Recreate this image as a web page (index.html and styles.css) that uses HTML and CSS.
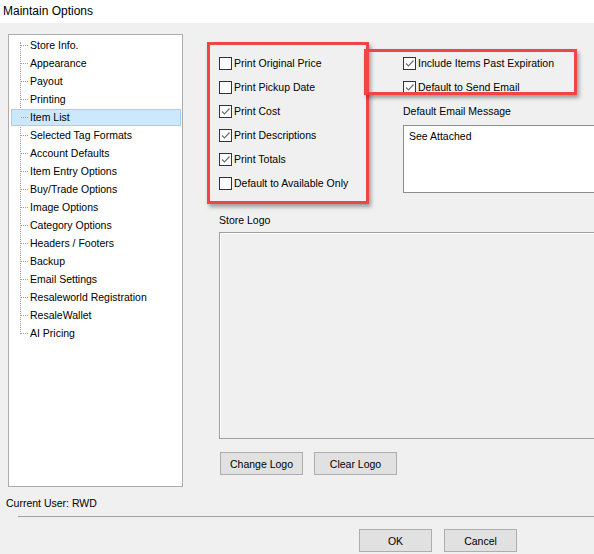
FILE: index.html
```html
<!DOCTYPE html>
<html>
<head>
<meta charset="utf-8">
<title>Maintain Options</title>
<link rel="stylesheet" href="styles.css">
</head>
<body>
<div class="window">
  <div class="titlebar">Maintain Options</div>

  <div class="dialog-body">
    <div class="tree">
      <ul class="tree-list">
        <li>Store Info.</li>
        <li>Appearance</li>
        <li>Payout</li>
        <li>Printing</li>
        <li class="selected">Item List</li>
        <li>Selected Tag Formats</li>
        <li>Account Defaults</li>
        <li>Item Entry Options</li>
        <li>Buy/Trade Options</li>
        <li>Image Options</li>
        <li>Category Options</li>
        <li>Headers / Footers</li>
        <li>Backup</li>
        <li>Email Settings</li>
        <li>Resaleworld Registration</li>
        <li>ResaleWallet</li>
        <li>AI Pricing</li>
      </ul>
    </div>

    <div class="pane">
      <div class="options">
        <div class="col col-left">
          <label class="check"><span class="box"></span>Print Original Price</label>
          <label class="check"><span class="box"></span>Print Pickup Date</label>
          <label class="check"><span class="box checked"><svg viewBox="0 0 11 11" width="11" height="11"><path d="M2 5.5 L4.5 8 L9.5 2.5" fill="none" stroke="#707070" stroke-width="1.2"/></svg></span>Print Cost</label>
          <label class="check"><span class="box checked"><svg viewBox="0 0 11 11" width="11" height="11"><path d="M2 5.5 L4.5 8 L9.5 2.5" fill="none" stroke="#707070" stroke-width="1.2"/></svg></span>Print Descriptions</label>
          <label class="check"><span class="box checked"><svg viewBox="0 0 11 11" width="11" height="11"><path d="M2 5.5 L4.5 8 L9.5 2.5" fill="none" stroke="#707070" stroke-width="1.2"/></svg></span>Print Totals</label>
          <label class="check"><span class="box"></span>Default to Available Only</label>
          <div class="mark mark-left"></div>
        </div>
        <div class="col col-right">
          <label class="check"><span class="box checked"><svg viewBox="0 0 11 11" width="11" height="11"><path d="M2 5.5 L4.5 8 L9.5 2.5" fill="none" stroke="#707070" stroke-width="1.2"/></svg></span>Include Items Past Expiration</label>
          <label class="check"><span class="box checked"><svg viewBox="0 0 11 11" width="11" height="11"><path d="M2 5.5 L4.5 8 L9.5 2.5" fill="none" stroke="#707070" stroke-width="1.2"/></svg></span>Default to Send Email</label>
          <div class="field-label">Default Email Message</div>
          <div class="memo">See Attached</div>
          <div class="mark mark-right"></div>
        </div>
      </div>

      <div class="logo-label">Store Logo</div>
      <div class="logo-box"></div>
      <div class="logo-buttons">
        <button class="btn btn-logo">Change Logo</button>
        <button class="btn btn-logo">Clear Logo</button>
      </div>
    </div>
  </div>

  <div class="status">Current User: RWD</div>
  <div class="separator"></div>
  <div class="actions">
    <button class="btn btn-action">OK</button>
    <button class="btn btn-action">Cancel</button>
  </div>
</div>
</body>
</html>
```

FILE: styles.css
```css
html, body {
  margin: 0;
  padding: 0;
}

body {
  background: #f0f0f0;
  font-family: "Liberation Sans", Arial, sans-serif;
  font-size: 10.5px;
  color: #000;
  width: 594px;
  height: 554px;
  overflow: hidden;
}

.titlebar {
  height: 23px;
  line-height: 22px;
  background: #fff;
  padding-left: 3px;
  font-size: 12px;
}

/* main area: tree on the left, settings pane on the right */
.dialog-body {
  display: flex;
  padding: 11px 0 0 8px;
  height: 453px;
}

.tree {
  width: 175px;
  height: 453px;
  box-sizing: border-box;
  border: 1px solid #acacac;
  background: #fff;
  padding-top: 1px;
}

.tree-list {
  list-style: none;
  margin: 0;
  padding: 0;
  position: relative;
}

/* vertical connector of the tree */
.tree-list::before {
  content: "";
  position: absolute;
  left: 11px;
  top: 6px;
  bottom: 8px;
  border-left: 1px dotted #a0a0a0;
}

.tree-list li {
  position: relative;
  height: 18px;
  line-height: 18px;
  padding-left: 21px;
  white-space: nowrap;
}

/* horizontal connector of each node */
.tree-list li::before {
  content: "";
  position: absolute;
  left: 12px;
  top: 9px;
  width: 7px;
  border-top: 1px dotted #a0a0a0;
  z-index: 1;
}

.tree-list li.selected {
  isolation: isolate;
}

/* highlight behind the selected node */
.tree-list li.selected::after {
  content: "";
  position: absolute;
  left: 2px;
  right: 1px;
  top: 1px;
  bottom: 0;
  background: #cce8ff;
  border: 1px solid #99d1ff;
  z-index: -1;
}

.pane {
  margin-left: 36px;
  padding-top: 17px;
  flex: 1;
  display: flex;
  flex-direction: column;
  min-width: 0;
}

.options {
  display: grid;
  grid-template-columns: 184px 1fr;
  height: 144px;
}

.col {
  position: relative;
  display: flex;
  flex-direction: column;
}

.check {
  display: flex;
  align-items: center;
  height: 24px;
  white-space: nowrap;
}

.box {
  width: 13px;
  height: 13px;
  box-sizing: border-box;
  border: 1px solid #333;
  background: #fff;
  margin-right: 2px;
  display: flex;
  align-items: center;
  justify-content: center;
  flex: none;
}

.box svg {
  display: block;
}

.field-label {
  height: 24px;
  line-height: 24px;
}

.memo {
  margin-top: 2px;
  height: 68px;
  box-sizing: border-box;
  border: 1px solid #8c8c8c;
  border-right: none;
  background: #fff;
  padding: 3px 5px;
  line-height: 14px;
}

/* red highlight frames drawn over the option groups */
.mark {
  position: absolute;
  border: 3px solid #f24444;
  box-shadow: 2px 3px 4px rgba(0, 0, 0, 0.35);
  pointer-events: none;
}

.mark-left {
  left: -12px;
  top: -9px;
  width: 156px;
  height: 156px;
}

.mark-right {
  left: -39px;
  top: -2px;
  width: 207px;
  height: 40px;
}

.logo-label {
  margin-top: 19px;
  height: 12px;
  line-height: 12px;
}

.logo-box {
  margin-top: 6px;
  height: 207px;
  box-sizing: border-box;
  border: 1px solid #a0a0a0;
  border-right: none;
  box-shadow: inset 1px 1px 0 #fff;
}

.logo-buttons {
  display: flex;
  gap: 11px;
  margin-top: 13px;
  padding-left: 1px;
}

.btn {
  font-family: "Liberation Sans", Arial, sans-serif;
  font-size: 10.5px;
  color: #000;
  background: #e1e1e1;
  border: 1px solid #adadad;
  border-radius: 0;
  padding: 0;
  height: 23px;
  box-sizing: border-box;
}

.btn-logo {
  width: 83px;
}

.btn-action {
  width: 73px;
}

.status {
  margin-top: 10px;
  padding-left: 6px;
  height: 12px;
  line-height: 12px;
}

.separator {
  margin: 7px 0 0 18px;
  height: 0;
  border-top: 1px solid #a0a0a0;
}

.actions {
  display: flex;
  justify-content: flex-end;
  gap: 12px;
  padding-right: 77px;
  margin-top: 12px;
}
```
